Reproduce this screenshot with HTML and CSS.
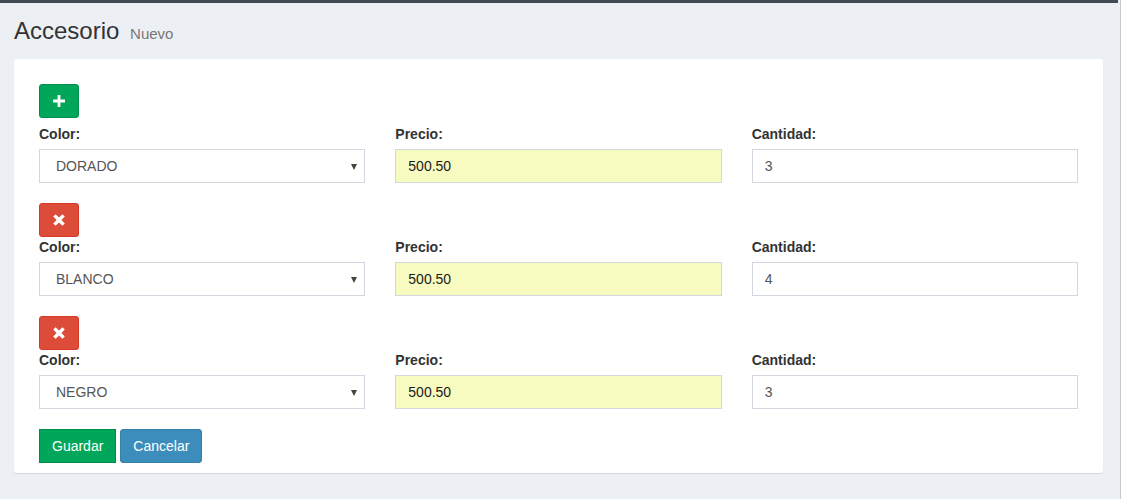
FILE: index.html
```html
<!DOCTYPE html>
<html lang="es">
<head>
<meta charset="utf-8">
<title>Accesorio - Nuevo</title>
<link rel="stylesheet" href="styles.css">
</head>
<body>
<div class="page">
  <div class="topbar"></div>
  <section class="content-header">
    <h1>Accesorio <small>Nuevo</small></h1>
  </section>
  <section class="content">
    <div class="box">
      <form class="box-body">
        <div class="entry">
          <div class="entry-tools entry-tools--first">
            <button type="button" class="btn btn-success btn-icon" aria-label="Agregar">
              <svg width="12" height="12" viewBox="0 0 12 12"><path d="M4.6 0h2.8v4.6H12v2.8H7.4V12H4.6V7.4H0V4.6h4.6z" fill="#fff"/></svg>
            </button>
          </div>
          <div class="fields">
            <div class="field">
              <label>Color:</label>
              <div class="select-wrap">
                <select class="control"><option>DORADO</option></select>
              </div>
            </div>
            <div class="field">
              <label>Precio:</label>
              <input class="control control--price" type="text" value="500.50">
            </div>
            <div class="field">
              <label>Cantidad:</label>
              <input class="control" type="text" value="3">
            </div>
          </div>
        </div>

        <div class="entry">
          <div class="entry-tools">
            <button type="button" class="btn btn-danger btn-icon" aria-label="Quitar">
              <svg width="12" height="12" viewBox="0 0 11 11"><path d="M0.2 2.4L2.4 0.2 5.5 3.3 8.6 0.2 10.8 2.4 7.7 5.5 10.8 8.6 8.6 10.8 5.5 7.7 2.4 10.8 0.2 8.6 3.3 5.5z" fill="#fff"/></svg>
            </button>
          </div>
          <div class="fields">
            <div class="field">
              <label>Color:</label>
              <div class="select-wrap">
                <select class="control"><option>BLANCO</option></select>
              </div>
            </div>
            <div class="field">
              <label>Precio:</label>
              <input class="control control--price" type="text" value="500.50">
            </div>
            <div class="field">
              <label>Cantidad:</label>
              <input class="control" type="text" value="4">
            </div>
          </div>
        </div>

        <div class="entry">
          <div class="entry-tools">
            <button type="button" class="btn btn-danger btn-icon" aria-label="Quitar">
              <svg width="12" height="12" viewBox="0 0 11 11"><path d="M0.2 2.4L2.4 0.2 5.5 3.3 8.6 0.2 10.8 2.4 7.7 5.5 10.8 8.6 8.6 10.8 5.5 7.7 2.4 10.8 0.2 8.6 3.3 5.5z" fill="#fff"/></svg>
            </button>
          </div>
          <div class="fields">
            <div class="field">
              <label>Color:</label>
              <div class="select-wrap">
                <select class="control"><option>NEGRO</option></select>
              </div>
            </div>
            <div class="field">
              <label>Precio:</label>
              <input class="control control--price" type="text" value="500.50">
            </div>
            <div class="field">
              <label>Cantidad:</label>
              <input class="control" type="text" value="3">
            </div>
          </div>
        </div>

        <div class="actions">
          <button type="submit" class="btn btn-success btn-square">Guardar</button>
          <button type="button" class="btn btn-primary">Cancelar</button>
        </div>
      </form>
    </div>
  </section>
</div>
</body>
</html>
```

FILE: styles.css
```css
* {
  box-sizing: border-box;
}

html, body {
  margin: 0;
  padding: 0;
  background: #ecf0f5;
}

body {
  font-family: "Liberation Sans", Arial, sans-serif;
  font-size: 14px;
  line-height: 1.42857;
  color: #333;
}

.page {
  width: 1121px;
  min-height: 499px;
  border-right: 1px solid #c8c8c8;
}

.topbar {
  height: 3px;
  background: #414954;
  margin-right: 2px;
}

.content-header {
  padding: 15px 15px 0 14px;
}

.content-header h1 {
  margin: 0;
  font-size: 24px;
  font-weight: 400;
  line-height: 1.1;
  color: #333;
}

.content-header h1 small {
  font-size: 15px;
  color: #777;
  padding-left: 4px;
  font-weight: 400;
}

.content {
  padding: 15px 17px 15px 14px;
}

.box {
  background: #fff;
  border-radius: 3px;
  box-shadow: 0 1px 1px rgba(0, 0, 0, 0.1);
}

.box-body {
  padding: 25px 25px 10px 25px;
}

.entry {
  margin-bottom: 20px;
}

.entry-tools {
  display: flex;
}

.entry-tools--first {
  margin-bottom: 6px;
}

.fields {
  display: grid;
  grid-template-columns: 1fr 1fr 1fr;
  column-gap: 30px;
}

.field label {
  display: block;
  font-weight: 700;
  margin-bottom: 5px;
  line-height: 20px;
}

.control {
  display: block;
  width: 100%;
  height: 34px;
  padding: 6px 12px;
  font-family: "Liberation Sans", Arial, sans-serif;
  font-size: 14px;
  color: #555;
  background: #fff;
  border: 1px solid #d2d6de;
  border-radius: 0;
  outline: none;
}

.control--price {
  background: #f8fbc0;
  color: #1a1a1a;
}

.select-wrap {
  position: relative;
}

.select-wrap select {
  -webkit-appearance: none;
  appearance: none;
  padding-left: 16px;
}

.select-wrap::after {
  content: "";
  position: absolute;
  right: 8px;
  top: 15px;
  border-left: 3.5px solid transparent;
  border-right: 3.5px solid transparent;
  border-top: 6px solid #444;
  pointer-events: none;
}

.btn {
  display: inline-flex;
  align-items: center;
  justify-content: center;
  height: 34px;
  padding: 6px 12px;
  font-family: "Liberation Sans", Arial, sans-serif;
  font-size: 14px;
  line-height: 20px;
  color: #fff;
  border: 1px solid transparent;
  border-radius: 3px;
  cursor: pointer;
}

.btn-icon {
  width: 40px;
  padding: 0;
}

.btn-success {
  background: #00a65a;
  border-color: #008d4c;
}

.btn-danger {
  background: #dd4b39;
  border-color: #d73925;
}

.btn-primary {
  background: #3c8dbc;
  border-color: #367fa9;
}

.btn-square {
  border-radius: 0;
}

.actions {
  display: flex;
  gap: 4px;
}
```
